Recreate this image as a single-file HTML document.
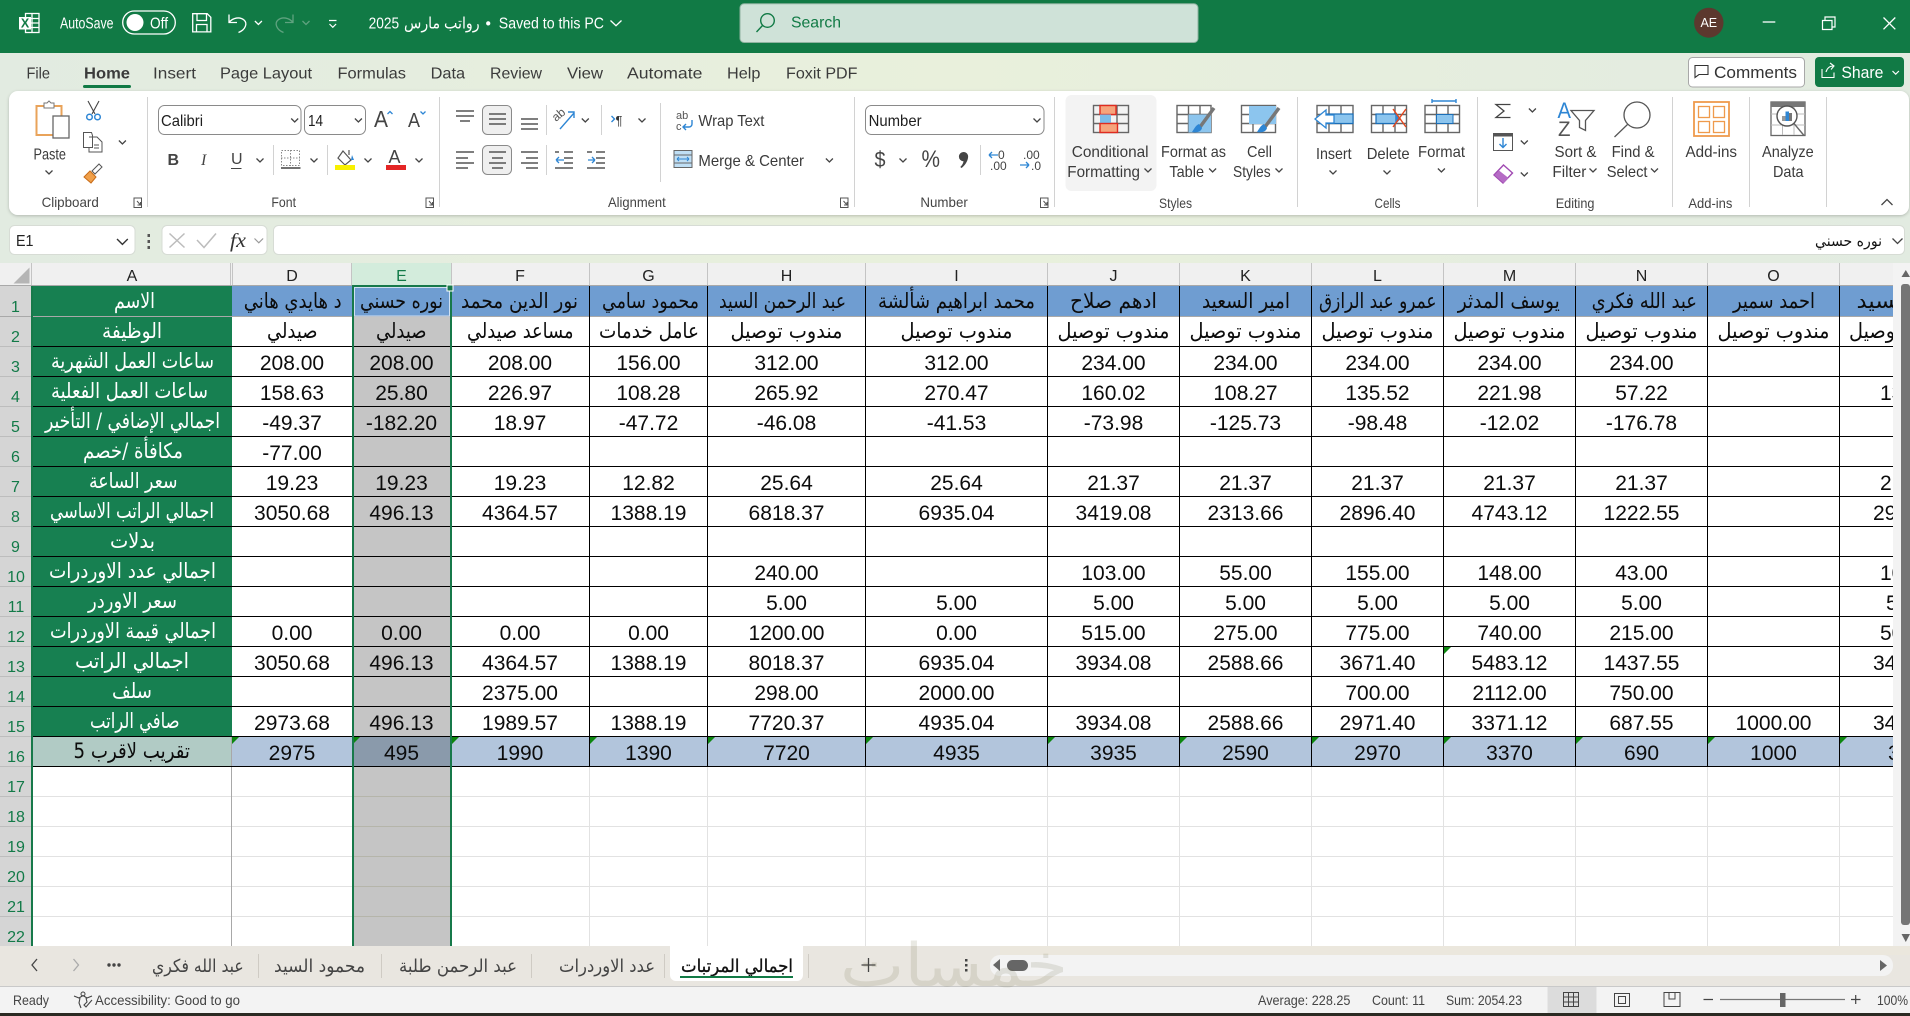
<!DOCTYPE html>
<html lang="en">
<head>
<meta charset="utf-8">
<title>Excel</title>
<style>
html,body{margin:0;padding:0;background:#fff;width:1910px;height:1016px;overflow:hidden}
svg{display:block;font-family:"Liberation Sans","DejaVu Sans",sans-serif}
.g{shape-rendering:crispEdges}
.r text{font-size:16px;fill:#3b3b3b}
.a text{font-family:"DejaVu Sans","Liberation Sans",sans-serif}
.n text{font-size:21px;fill:#0c0c0c;text-anchor:middle}
.p text{font-size:21px;fill:#0c0c0c}
.w text{fill:#fff;font-size:21px}
.b text{fill:#0c0c0c;font-size:21px}
.h text{font-size:16px;fill:#222;text-anchor:middle}
.rn text{font-size:16px;fill:#127a48;text-anchor:middle}
.s text{font-size:14px;fill:#444}
</style>
</head>
<body>
<svg width="1910" height="1016" viewBox="0 0 1910 1016" xmlns="http://www.w3.org/2000/svg">
<defs>
<linearGradient id="bg" x1="0" x2="1" y1="0" y2="0"><stop offset="0" stop-color="#e2ebe1"/><stop offset=".5" stop-color="#e9f0dc"/><stop offset="1" stop-color="#e2ebe1"/></linearGradient>
<path id="c" d="M-3.5-1.5 0 2 3.5-1.5" fill="none" stroke="#444" stroke-width="1.3"/>
<path id="lc" d="M0 0h7.5v9.5h-7.5zM3 3l3.500 4M6.500 4v3h-3" fill="none" stroke="#555" stroke-width="1"/>
<clipPath id="sheet"><rect x="0" y="263" width="1893" height="683"/></clipPath>
<filter id="sh" x="-1%" y="-5%" width="102%" height="115%"><feDropShadow dx="0" dy="1" stdDeviation="1.5" flood-color="#000" flood-opacity=".22"/></filter>
</defs>

<!-- backgrounds -->
<rect width="1910" height="1016" fill="url(#bg)"/>
<rect width="1910" height="53" fill="#117a45"/>

<!-- title bar -->
<g fill="none" stroke="#fff" stroke-width="1.3">
<rect x="25.5" y="13.5" width="13.5" height="19"/><path d="M32 14v18M31 18.500h8M31 23h8M31 27.500h8"/>
</g>
<rect x="19" y="17" width="12" height="12.5" fill="#fff"/>
<text x="25" y="27.5" font-size="12.5" font-weight="bold" fill="#117a45" text-anchor="middle">X</text>
<text x="60" y="28.500" font-size="15.500" fill="#fff" textLength="53.5" lengthAdjust="spacingAndGlyphs">AutoSave</text>
<rect x="122.7" y="11" width="52.6" height="23" rx="11.5" fill="none" stroke="#fff" stroke-width="1.3"/>
<circle cx="135" cy="22.5" r="8.5" fill="#fff"/>
<text x="150" y="28.500" font-size="15.500" fill="#fff" textLength="18" lengthAdjust="spacingAndGlyphs">Off</text>
<path d="M192.7 13.7h14.5l3.6 3.6v14.6h-18.1zM197 14v6.5h9.5V14M196.5 32v-7.5h10.5V32" fill="none" stroke="#fff" stroke-width="1.3"/>
<path d="M229 14.5v8h8M229 22.5c4-5 11-6 15-2.500 3.500 3 2 9.500-5.500 12.500" fill="none" stroke="#fff" stroke-width="1.3"/>
<path d="M254.900 21l3.500 3.500 3.500-3.500" fill="none" stroke="#fff" stroke-width="1.300"/>
<path d="M293 14.500v8h-8M293 22.500c-4-5-11-6-15-2.500-3.500 3-2 9.500 5.500 12.500" fill="none" stroke="#5fa27f" stroke-width="1.300"/>
<path d="M302.500 21 306 24.500 309.500 21" fill="none" stroke="#5fa27f" stroke-width="1.300"/>
<path d="M329 20.500h7.500M329.500 24l3.300 3.300 3.300-3.300" fill="none" stroke="#fff" stroke-width="1.200"/>
<g fill="#fff" font-size="15.500">
<text x="368.600" y="28.500" textLength="30.500" lengthAdjust="spacingAndGlyphs">2025</text>
<text x="404" y="28.500" font-size="16" textLength="75.600" lengthAdjust="spacingAndGlyphs">رواتب مارس</text>
<text x="485.500" y="28.500">•</text>
<text x="498.800" y="28.500" textLength="105.200" lengthAdjust="spacingAndGlyphs">Saved to this PC</text>
</g>
<path d="M610.500 20.500l5.500 5.200 5.500-5.200" fill="none" stroke="#fff" stroke-width="1.300"/>
<rect x="740" y="3.800" width="458" height="38.700" rx="4" fill="#cfe2d8" stroke="#8fb3a0"/>
<circle cx="767.500" cy="20.500" r="6.800" fill="none" stroke="#117a45" stroke-width="1.400"/>
<path d="M762.500 25.500 756.500 32" stroke="#117a45" stroke-width="1.400"/>
<text x="791" y="27.500" font-size="16" fill="#117a45" textLength="50" lengthAdjust="spacingAndGlyphs">Search</text>
<ellipse cx="1708.800" cy="22.700" rx="14.700" ry="15" fill="#5c382e"/>
<text x="1708.800" y="27" font-size="12.500" fill="#fff" text-anchor="middle">AE</text>
<path d="M1762.700 22h12.600" stroke="#fff" stroke-width="1.300"/>
<path d="M1822.500 20.500h9.500v9h-9.500zM1825 20v-3h10v10h-3" fill="none" stroke="#fff" stroke-width="1.200"/>
<path d="M1883.500 17.500l11.800 11.800M1895.300 17.500l-11.800 11.800" stroke="#fff" stroke-width="1.300"/>

<!-- tabs row -->
<g class="r">
<text x="26.500" y="78.500" textLength="23.500" lengthAdjust="spacingAndGlyphs">File</text>
<text x="84" y="78.500" font-weight="bold" textLength="46" lengthAdjust="spacingAndGlyphs">Home</text>
<text x="153" y="78.500" textLength="43" lengthAdjust="spacingAndGlyphs">Insert</text>
<text x="220" y="78.500" textLength="92" lengthAdjust="spacingAndGlyphs">Page Layout</text>
<text x="337.500" y="78.500" textLength="68.500" lengthAdjust="spacingAndGlyphs">Formulas</text>
<text x="430.600" y="78.500" textLength="34.500" lengthAdjust="spacingAndGlyphs">Data</text>
<text x="490" y="78.500" textLength="52" lengthAdjust="spacingAndGlyphs">Review</text>
<text x="567" y="78.500" textLength="36" lengthAdjust="spacingAndGlyphs">View</text>
<text x="627" y="78.500" textLength="75.400" lengthAdjust="spacingAndGlyphs">Automate</text>
<text x="727" y="78.500" textLength="33.400" lengthAdjust="spacingAndGlyphs">Help</text>
<text x="786" y="78.500" textLength="71.500" lengthAdjust="spacingAndGlyphs">Foxit PDF</text>
</g>
<rect x="83" y="85" width="48" height="3" rx="1.500" fill="#117a45"/>
<rect x="1688.500" y="57.500" width="116" height="29.500" rx="4" fill="#fff" stroke="#a8a8a8"/>
<path d="M1695 65.500h13v9h-9l-4 3z" fill="none" stroke="#333" stroke-width="1.100"/>
<text x="1714" y="78" font-size="16.500" fill="#333" textLength="83" lengthAdjust="spacingAndGlyphs">Comments</text>
<rect x="1815" y="57" width="89" height="30" rx="4" fill="#117a45"/>
<path d="M1822 69v8.500h12v-5M1826 72c1-4 4-6 7-6M1830 63l4 3-3 3.500" fill="none" stroke="#fff" stroke-width="1.100"/>
<text x="1841.400" y="78" font-size="16.500" fill="#fff" textLength="42" lengthAdjust="spacingAndGlyphs">Share</text>
<path d="M1892.500 71l3.200 3.200 3.200-3.200" fill="none" stroke="#fff" stroke-width="1.200"/>

<!-- ribbon body -->
<rect x="9" y="91" width="1900" height="124" rx="9" fill="#fff" filter="url(#sh)"/>
<g class="g" stroke="#d2d2d2">
<path d="M147.500 97v110M439.500 97v110M854.500 97v110M1054.500 97v110M1297.500 97v110M1477.500 97v110M1672.500 97v110M1749.500 97v110M1826.500 97v110"/>
<path d="M273.500 145v30M327.500 145v30M546.500 105v30M546.500 145v30M601.500 105v30M660.500 103v79M980.500 145v30"/>
</g>
<g class="s">
<text x="41.600" y="207" textLength="57.200" lengthAdjust="spacingAndGlyphs">Clipboard</text>
<text x="271.400" y="207" textLength="24.600" lengthAdjust="spacingAndGlyphs">Font</text>
<text x="608" y="207" textLength="57.700" lengthAdjust="spacingAndGlyphs">Alignment</text>
<text x="920.400" y="207" textLength="47.400" lengthAdjust="spacingAndGlyphs">Number</text>
<text x="1159" y="208" textLength="33" lengthAdjust="spacingAndGlyphs">Styles</text>
<text x="1374.500" y="208" textLength="26" lengthAdjust="spacingAndGlyphs">Cells</text>
<text x="1555.700" y="208" textLength="38.800" lengthAdjust="spacingAndGlyphs">Editing</text>
<text x="1688.400" y="208" textLength="44" lengthAdjust="spacingAndGlyphs">Add-ins</text>
</g>
<use href="#lc" x="134" y="198"/><use href="#lc" x="426" y="198"/><use href="#lc" x="840.500" y="198"/><use href="#lc" x="1040.500" y="198"/>
<path d="M1881.500 205l5.500-5.500 5.500 5.500" fill="none" stroke="#444" stroke-width="1.300"/>

<!-- clipboard -->
<rect x="36.500" y="106" width="25" height="29" fill="#fff" stroke="#e9a35a" stroke-width="2"/>
<path d="M44 106v-3h3l2-2 2 2h3v5h-10z" fill="#fff" stroke="#777"/>
<rect x="53" y="116" width="16" height="22" fill="#fff" stroke="#666" stroke-width="1.300"/>
<g class="r"><text x="33.500" y="159.500" textLength="32.500" lengthAdjust="spacingAndGlyphs">Paste</text></g>
<use href="#c" x="49" y="172"/>
<path d="M88 101l7 13M99 101l-7 13" stroke="#444" fill="none" stroke-width="1.100"/>
<circle cx="89.500" cy="117" r="2.800" fill="none" stroke="#2e86d4" stroke-width="1.500"/><circle cx="97.500" cy="117" r="2.800" fill="none" stroke="#2e86d4" stroke-width="1.500"/>
<path d="M83.500 132.500h8l1 3v12h-9zM89 137h8l5 5v10H89v-5M94 145h5M94 148h5" fill="#fff" stroke="#555"/>
<use href="#c" x="122.400" y="142"/>
<path d="M92 171l7-7 3 3-7 7z" fill="#fff" stroke="#555"/>
<path d="M90 171l6 6-5 6-7-6z" fill="#f0a04a" stroke="#c86c18"/>

<!-- font -->
<g fill="#fff" stroke="#8a8a8a"><rect x="158.500" y="105.500" width="142.500" height="29" rx="6"/><rect x="304.500" y="105.500" width="61" height="29" rx="6"/><rect x="865.500" y="105.500" width="178.500" height="29" rx="6"/></g>
<g font-size="16" fill="#1e1e1e">
<text x="161" y="126" textLength="42" lengthAdjust="spacingAndGlyphs">Calibri</text>
<text x="308" y="126" textLength="15" lengthAdjust="spacingAndGlyphs">14</text>
<text x="868.600" y="126" textLength="53" lengthAdjust="spacingAndGlyphs">Number</text>
</g>
<use href="#c" x="294.700" y="120"/><use href="#c" x="358.400" y="120"/><use href="#c" x="1037" y="120"/>
<text x="374" y="127" font-size="23" fill="#444" textLength="14" lengthAdjust="spacingAndGlyphs">A</text>
<path d="M387.500 114l2.500-2.500 2.500 2.500" fill="none" stroke="#2e86d4" stroke-width="1.300"/>
<text x="408" y="127" font-size="20" fill="#444" textLength="12" lengthAdjust="spacingAndGlyphs">A</text>
<path d="M420.500 111.500l2.500 2.500 2.500-2.500" fill="none" stroke="#2e86d4" stroke-width="1.300"/>
<text x="167.500" y="165" font-size="16" font-weight="bold" fill="#444">B</text>
<text x="201" y="165" font-size="16" font-style="italic" fill="#444" font-family="Liberation Serif">I</text>
<text x="231" y="164" font-size="16" fill="#444">U</text><path d="M231 168.500h10.500" stroke="#444"/>
<use href="#c" x="260" y="160"/>
<path d="M281.500 150.500h18v15h-18zM290.500 150v16M281 158h19" fill="none" stroke="#888" stroke-dasharray="1.500 1.500"/><path d="M281 168h19.500" stroke="#444" stroke-width="1.500"/>
<use href="#c" x="314" y="160"/>
<path d="M343 151l8 9-6 5-7-7zM349 155v-5" fill="none" stroke="#555" stroke-width="1.200"/><path d="M352 155l2 5h-3z" fill="#2e86d4"/>
<rect x="335" y="165" width="20" height="5" fill="#f8f000"/>
<use href="#c" x="368" y="160"/>
<text x="388.500" y="163" font-size="18" fill="#444">A</text>
<rect x="386" y="165" width="20" height="5" fill="#e42525"/>
<use href="#c" x="419" y="160"/>

<!-- alignment -->
<g fill="#efefef" stroke="#8a8a8a"><rect x="482.500" y="105.500" width="29" height="29" rx="5"/><rect x="482.500" y="145.500" width="29" height="29" rx="5"/></g>
<g stroke="#555" stroke-width="1.400" fill="none">
<path d="M456 111h18M456 116h18M460 121h10M489 114h17M489 119h17M489 124h17M521 119h17M521 124h17M521 129h17"/>
<path d="M456 152h18M456 158h12M456 163h18M456 168h12"/>
<path d="M489 152h17M492 158h11M489 163h17M492 168h11"/>
<path d="M521 152h17M526 158h12M521 163h17M526 168h12"/>
<path d="M564 152h9M564 158h9M564 163h9M555 152h4M555 168h18"/>
<path d="M596 152h9M596 158h9M596 163h9M587 168h18M587 152h5"/>
</g>
<path d="M556 160h8M556 160l3-3M556 160l3 3M588 160h7M595 160l-3-3M595 160l-3 3" fill="none" stroke="#2e86d4" stroke-width="1.300"/>
<text x="556" y="122" font-size="12" fill="#555" transform="rotate(-40 556 122)">ab</text>
<path d="M560 129l14-16M568 112h6v6" fill="none" stroke="#2e86d4" stroke-width="1.400"/>
<use href="#c" x="585.300" y="120"/>
<path d="M611.500 116l3 3-3 3" fill="none" stroke="#2e86d4" stroke-width="1.400"/>
<text x="615.500" y="125" font-size="13" fill="#333">¶</text>
<use href="#c" x="642" y="120"/>
<text x="676" y="119" font-size="11" fill="#555">ab</text><text x="676" y="130" font-size="11" fill="#555">c</text>
<path d="M692 120v4a3 3 0 0 1-3 3h-6M686 124l-3 3 3 3" fill="none" stroke="#2e86d4" stroke-width="1.400"/>
<g class="r">
<text x="698.400" y="126" textLength="66" lengthAdjust="spacingAndGlyphs">Wrap Text</text>
<text x="698.400" y="166" textLength="105.600" lengthAdjust="spacingAndGlyphs">Merge &amp; Center</text>
</g>
<rect x="674" y="150.500" width="18" height="17" fill="#bfdff5" stroke="#666"/>
<path d="M674 155h18M674 163h18" stroke="#666"/><path d="M677 159h12M677 159l2-2M677 159l2 2M689 159l-2-2M689 159l-2 2" fill="none" stroke="#2e86d4"/>
<use href="#c" x="829.400" y="160"/>

<!-- number -->
<text x="874.500" y="167" font-size="22" fill="#444" textLength="11" lengthAdjust="spacingAndGlyphs">$</text>
<use href="#c" x="903" y="160"/>
<text x="921.500" y="167" font-size="24" fill="#444" textLength="18.500" lengthAdjust="spacingAndGlyphs">%</text>
<path d="M963.500 152a4.600 4.600 0 0 1 4.600 5.200c-.4 4-3 8-6.600 10.800l-1.200-1c2-2 3-4 3.200-5.800a4.600 4.600 0 0 1 0-9.200z" fill="#444"/>
<text x="998" y="159" font-size="12" fill="#444">0</text><text x="990" y="170" font-size="12" fill="#444">.00</text>
<path d="M998 155h-9M989 155l3-3M989 155l3 3" fill="none" stroke="#2e86d4" stroke-width="1.300"/>
<text x="1023" y="159" font-size="12" fill="#444">.00</text><text x="1031" y="170" font-size="12" fill="#444">.0</text>
<path d="M1020 165h9M1029 165l-3-3M1029 165l-3 3" fill="none" stroke="#2e86d4" stroke-width="1.300"/>

<!-- styles -->
<rect x="1065.500" y="95" width="91" height="96" rx="6" fill="#f3f3f3"/>
<g fill="none" stroke="#666" stroke-width="1.400">
<rect x="1093.500" y="105.500" width="35" height="27"/><path d="M1093 114.500h36M1093 123.500h36M1105 105v27M1117 105v27"/>
<rect x="1177" y="105.500" width="34" height="27"/><path d="M1177 114.500h34M1177 123.500h34M1188.500 105v27M1200 105v27"/>
<rect x="1241.500" y="105.500" width="34" height="27"/><path d="M1241 114.500h35M1241 123.500h35M1253 105v27"/>
</g>
<rect x="1100" y="105.500" width="16" height="9" fill="#f6a47c" stroke="#e02b20" stroke-width="1.400"/>
<rect x="1100" y="114.500" width="11" height="9" fill="#7dbce8"/>
<rect x="1100" y="123.500" width="17.500" height="9" fill="#f6a47c" stroke="#e02b20" stroke-width="1.400"/>
<path d="M1188.500 114.500H1211v18h-22.500z" fill="#8cc5ee"/>
<path d="M1214 108l-14 19" stroke="#777" stroke-width="3.500"/><path d="M1199 124c-3 1-5 5-7 8 4 1 9 0 10-4z" fill="#2e86d4"/>
<path d="M1249 106h27v18h-27z" fill="#8cc5ee"/>
<path d="M1279 108l-14 19" stroke="#777" stroke-width="3.500"/><path d="M1264 124c-3 1-5 5-7 8 4 1 9 0 10-4z" fill="#2e86d4"/>
<g class="r">
<text x="1071.800" y="157" textLength="76.800" lengthAdjust="spacingAndGlyphs">Conditional</text>
<text x="1067.300" y="177" textLength="72.700" lengthAdjust="spacingAndGlyphs">Formatting</text>
<text x="1161" y="157" textLength="65" lengthAdjust="spacingAndGlyphs">Format as</text>
<text x="1169.400" y="177" textLength="34.600" lengthAdjust="spacingAndGlyphs">Table</text>
<text x="1247" y="157" textLength="25" lengthAdjust="spacingAndGlyphs">Cell</text>
<text x="1233" y="177" textLength="37.600" lengthAdjust="spacingAndGlyphs">Styles</text>
<text x="1316" y="159" textLength="35.600" lengthAdjust="spacingAndGlyphs">Insert</text>
<text x="1366.700" y="159" textLength="42.900" lengthAdjust="spacingAndGlyphs">Delete</text>
<text x="1418" y="157" textLength="47" lengthAdjust="spacingAndGlyphs">Format</text>
<text x="1554.500" y="157" textLength="42" lengthAdjust="spacingAndGlyphs">Sort &amp;</text>
<text x="1552.400" y="177" textLength="33.900" lengthAdjust="spacingAndGlyphs">Filter</text>
<text x="1611.600" y="157" textLength="42.900" lengthAdjust="spacingAndGlyphs">Find &amp;</text>
<text x="1606.700" y="177" textLength="40.800" lengthAdjust="spacingAndGlyphs">Select</text>
<text x="1685.500" y="157" textLength="51.500" lengthAdjust="spacingAndGlyphs">Add-ins</text>
<text x="1762" y="157" textLength="51.700" lengthAdjust="spacingAndGlyphs">Analyze</text>
<text x="1773" y="177" textLength="30.500" lengthAdjust="spacingAndGlyphs">Data</text>
</g>
<use href="#c" x="1148" y="170"/><use href="#c" x="1212.600" y="170"/><use href="#c" x="1279" y="170"/>

<!-- cells -->
<g fill="none" stroke="#666" stroke-width="1.400">
<rect x="1317" y="105.500" width="36" height="27"/><path d="M1317 114.500h36M1317 123.500h36M1329 105v27M1341 105v27"/>
<rect x="1371.500" y="105.500" width="35" height="27"/><path d="M1371 114.500h36M1371 123.500h36M1383 105v27M1395 105v27"/>
<rect x="1425" y="105.500" width="34.500" height="27"/><path d="M1425 114.500h35M1425 123.500h35M1436.500 105v27M1448 105v27"/>
</g>
<rect x="1325" y="114" width="28" height="9.500" fill="#8cc5ee" stroke="#1b6fb8" stroke-width="1.200"/>
<path d="M1326 110l-11 9 11 9v-5h8v-8h-8z" fill="#fff" stroke="#2e86d4" stroke-width="1.300"/>
<rect x="1376" y="114" width="20" height="9.500" fill="#8cc5ee" stroke="#1b6fb8" stroke-width="1.200"/>
<path d="M1396 114l5 4.700-5 4.800z" fill="#2e86d4"/>
<path d="M1393 109l13 18M1406 109l-13 18" stroke="#e4461d" stroke-width="1.400"/>
<rect x="1436.500" y="114.500" width="16.500" height="9" fill="#8cc5ee" stroke="#1b6fb8"/>
<path d="M1432 101h24M1432 99v4M1456 99v4" stroke="#2e86d4" stroke-width="1.400" fill="none"/>
<use href="#c" x="1333" y="172"/><use href="#c" x="1387" y="172"/><use href="#c" x="1441.400" y="170"/>

<!-- editing -->
<path d="M1510.500 104.500h-14.500l8 6.500-8 6.500h14.500" fill="none" stroke="#444" stroke-width="1.300"/>
<use href="#c" x="1532.400" y="110"/>
<rect x="1493.500" y="133.500" width="19" height="17" fill="#fff" stroke="#555"/><rect x="1493.500" y="133.500" width="19" height="3" fill="#555"/>
<path d="M1503 138v9M1499.500 144l3.500 3.500 3.500-3.500" fill="none" stroke="#2e86d4" stroke-width="1.400"/>
<use href="#c" x="1524.300" y="142"/>
<path d="M1503.500 165l9 8-9.500 10-9-8z" fill="#fff" stroke="#a04ab2" stroke-width="1.400"/><path d="M1494.500 175l4.500-4.500 9.500 7.500-5 5z" fill="#b56cc5"/>
<use href="#c" x="1524.300" y="174"/>
<text x="1557.500" y="118" font-size="22" fill="#2e86d4" textLength="13.500" lengthAdjust="spacingAndGlyphs">A</text>
<text x="1558" y="136" font-size="21" fill="#555" textLength="12.500" lengthAdjust="spacingAndGlyphs">Z</text>
<path d="M1571 110.500h23l-8.500 10v10l-6-3v-7z" fill="none" stroke="#555" stroke-width="1.300"/>
<use href="#c" x="1593" y="170"/>
<circle cx="1637" cy="115" r="13" fill="none" stroke="#555" stroke-width="1.300"/>
<path d="M1627.500 124.500 1614.500 137" stroke="#555" stroke-width="1.300"/>
<use href="#c" x="1654.500" y="170"/>

<!-- add-ins / analyze -->
<rect x="1694" y="102" width="35" height="34" fill="#fff" stroke="#ef9a4c" stroke-width="1.800"/>
<g fill="#fff" stroke="#ef9a4c" stroke-width="1.300"><rect x="1698.500" y="106.500" width="11" height="11"/><rect x="1713.500" y="106.500" width="11" height="11"/><rect x="1698.500" y="121.500" width="11" height="11"/><rect x="1713.500" y="121.500" width="11" height="11"/></g>
<rect x="1771" y="102" width="34" height="33.500" fill="#fff" stroke="#666" stroke-width="1.300"/><rect x="1771" y="102" width="34" height="5" fill="#777"/>
<path d="M1771 114h34M1771 125h34M1782.500 107v28M1794 107v28" stroke="#bbb"/>
<circle cx="1787" cy="116" r="10" fill="#fff" stroke="#555" stroke-width="1.400"/>
<rect x="1782" y="116" width="3.500" height="5" fill="#999"/><rect x="1785.500" y="111.500" width="3.500" height="9.500" fill="#2e86d4"/><rect x="1789" y="113" width="3" height="8" fill="#777"/>
<path d="M1794 123.500l10 12" stroke="#666" stroke-width="1.400"/>

<!-- formula bar -->
<g fill="#fff" stroke="#d7dcd5"><rect x="9.500" y="225.500" width="125.500" height="29" rx="5"/><rect x="162" y="225.500" width="105" height="29" rx="5"/><rect x="273.500" y="225.500" width="1631" height="29" rx="5"/></g>
<text x="16" y="246" font-size="16" fill="#222" textLength="17.500" lengthAdjust="spacingAndGlyphs">E1</text>
<path d="M117 239l5.400 5.400 5.400-5.400" fill="none" stroke="#333" stroke-width="1.400"/>
<g fill="#555"><rect x="147.500" y="234" width="2.500" height="3"/><rect x="147.500" y="240" width="2.500" height="3"/><rect x="147.500" y="246" width="2.500" height="3"/></g>
<path d="M169.500 233.500l15 14M184.500 233.500l-15 14" stroke="#bcbcbc" stroke-width="1.500"/>
<path d="M197 240l7 7.500 12-14" fill="none" stroke="#bcbcbc" stroke-width="1.500"/>
<text x="230" y="247" font-size="20" font-style="italic" font-family="Liberation Serif" fill="#333" textLength="16" lengthAdjust="spacingAndGlyphs">fx</text>
<path d="M254.500 238.500l4.300 4.300 4.300-4.300" fill="none" stroke="#999" stroke-width="1.200"/>
<text x="1815" y="246" font-size="15" fill="#111" style="font-family:'DejaVu Sans',sans-serif" textLength="67" lengthAdjust="spacingAndGlyphs">نوره حسني</text>
<path d="M1892.500 238.500l5 5 5-5" fill="none" stroke="#444" stroke-width="1.300"/>

<!-- sheet -->
<g clip-path="url(#sheet)">
<rect x="0" y="263" width="1893" height="23" fill="#f0f0f0"/>
<rect x="352" y="263" width="99" height="23" fill="#d3ecdc"/>
<rect x="0" y="286" width="31" height="660" fill="#d5d5d5"/>
<path d="M29.500 267.500v16h-16z" fill="#b5b5b5"/>
<rect x="32" y="286" width="1861" height="660" fill="#fff"/>
<rect x="32" y="286" width="200" height="450" fill="#178051"/>
<rect x="32" y="736" width="200" height="30" fill="#b1cbc5"/>
<rect x="232" y="286" width="1661" height="30" fill="#6f9dd1"/>
<rect x="232" y="736" width="1661" height="30" fill="#b2c5dc"/>
<rect x="352" y="316" width="99" height="630" fill="#c5c5c5"/>
<rect x="352" y="736" width="99" height="30" fill="#8a9aab"/>

<g class="g" fill="none">
<path stroke="#c4c4c4" d="M31.500 263v23M230.500 263v23M232.500 263v23M351.500 263v23M451.500 263v23M589.500 263v23M707.500 263v23M865.500 263v23M1047.500 263v23M1179.500 263v23M1311.500 263v23M1443.500 263v23M1575.500 263v23M1707.500 263v23M1839.500 263v23"/>
<path stroke="#a9a9a9" d="M0 285.500H1893M0 316.500H1893"/>
<path stroke="#bdbdbd" d="M0 346.500h31M0 376.500h31M0 406.500h31M0 436.500h31M0 466.500h31M0 496.500h31M0 526.500h31M0 556.500h31M0 586.500h31M0 616.500h31M0 646.500h31M0 676.500h31M0 706.500h31M0 736.500h31M0 766.500h31M0 796.500h31M0 826.500h31M0 856.500h31M0 886.500h31M0 916.500h31"/>
<path stroke="#e2e2e2" d="M232 796.500H1893M232 826.500H1893M232 856.500H1893M232 886.500H1893M232 916.500H1893M32 796.500H231M32 826.500H231M32 856.500H231M32 886.500H231M32 916.500H231M589.500 766V946M707.500 766V946M865.500 766V946M1047.500 766V946M1179.500 766V946M1311.500 766V946M1443.500 766V946M1575.500 766V946M1707.500 766V946M1839.500 766V946"/>
<path stroke="#b5b5aa" d="M353 796.500H450M353 826.500H450M353 856.500H450M353 886.500H450M353 916.500H450"/>
<path stroke="#a8a8a8" d="M231.500 736V946"/>
<path stroke="#000" d="M589.500 286V766M707.500 286V766M865.500 286V766M1047.500 286V766M1179.500 286V766M1311.500 286V766M1443.500 286V766M1575.500 286V766M1707.500 286V766M1839.500 286V766"/>
<path stroke="#000" d="M32 346.500H1893M32 376.500H1893M32 406.500H1893M32 436.500H1893M32 466.500H1893M32 496.500H1893M32 526.500H1893M32 556.500H1893M32 586.500H1893M32 616.500H1893M32 646.500H1893M32 676.500H1893M32 706.500H1893M32 736.500H1893M32 766.500H1893"/>
</g>

<!-- triangles -->
<g fill="#0d870f">
<path d="M232 737h7l-7 7zM353 737h7l-7 7zM452 737h7l-7 7zM590 737h7l-7 7zM708 737h7l-7 7zM866 737h7l-7 7zM1048 737h7l-7 7zM1180 737h7l-7 7zM1312 737h7l-7 7zM1444 737h7l-7 7zM1576 737h7l-7 7zM1708 737h7l-7 7zM1840 737h7l-7 7zM1444 647h7l-7 7z"/>
</g>

<!-- column headers -->
<g class="h">
<text x="132" y="281">A</text><text x="292" y="281">D</text><text x="401.500" y="281" style="fill:#127a48">E</text><text x="520" y="281">F</text><text x="648.500" y="281">G</text><text x="786.500" y="281">H</text><text x="956.500" y="281">I</text><text x="1113.500" y="281">J</text><text x="1245.500" y="281">K</text><text x="1377.500" y="281">L</text><text x="1509.500" y="281">M</text><text x="1641.500" y="281">N</text><text x="1773.500" y="281">O</text>
</g>
<!-- row numbers -->
<g class="rn">
<text x="15.500" y="312">1</text><text x="15.500" y="342">2</text><text x="15.500" y="372">3</text><text x="15.500" y="402">4</text><text x="15.500" y="432">5</text><text x="15.500" y="462">6</text><text x="15.500" y="492">7</text><text x="15.500" y="522">8</text><text x="15.500" y="552">9</text><text x="16" y="582">10</text><text x="16" y="612">11</text><text x="16" y="642">12</text><text x="16" y="672">13</text><text x="16" y="702">14</text><text x="16" y="732">15</text><text x="16" y="762">16</text><text x="16" y="792">17</text><text x="16" y="822">18</text><text x="16" y="852">19</text><text x="16" y="882">20</text><text x="16" y="912">21</text><text x="16" y="942">22</text>
</g>

<!-- col A labels -->
<g class="a w">
<text x="114" y="308" textLength="41" lengthAdjust="spacingAndGlyphs">الاسم</text>
<text x="102" y="338" textLength="60" lengthAdjust="spacingAndGlyphs">الوظيفة</text>
<text x="51" y="368" textLength="163" lengthAdjust="spacingAndGlyphs">ساعات العمل الشهرية</text>
<text x="51" y="398" textLength="157" lengthAdjust="spacingAndGlyphs">ساعات العمل الفعلية</text>
<text x="45" y="428" textLength="175" lengthAdjust="spacingAndGlyphs">اجمالي الإضافي / التأخير</text>
<text x="83" y="458" textLength="100" lengthAdjust="spacingAndGlyphs">مكافأة /خصم</text>
<text x="89" y="488" textLength="88.500" lengthAdjust="spacingAndGlyphs">سعر الساعة</text>
<text x="50" y="518" textLength="164" lengthAdjust="spacingAndGlyphs">اجمالي الراتب الاساسي</text>
<text x="110" y="548" textLength="45" lengthAdjust="spacingAndGlyphs">بدلات</text>
<text x="49" y="578" textLength="167" lengthAdjust="spacingAndGlyphs">اجمالي عدد الاوردرات</text>
<text x="88" y="608" textLength="89" lengthAdjust="spacingAndGlyphs">سعر الاوردر</text>
<text x="50" y="638" textLength="166" lengthAdjust="spacingAndGlyphs">اجمالي قيمة الاوردرات</text>
<text x="75" y="668" textLength="114" lengthAdjust="spacingAndGlyphs">اجمالي الراتب</text>
<text x="112" y="698" textLength="40" lengthAdjust="spacingAndGlyphs">سلف</text>
<text x="90" y="728" textLength="89.600" lengthAdjust="spacingAndGlyphs">صافي الراتب</text>
</g>
<g class="a b">
<text x="73.500" y="758" textLength="116.500" lengthAdjust="spacingAndGlyphs">تقريب لاقرب 5</text>
<!-- row 1 -->
<text x="243.700" y="308" textLength="98" lengthAdjust="spacingAndGlyphs">د هايدي هاني</text>
<text x="360" y="308" textLength="83" lengthAdjust="spacingAndGlyphs">نوره حسني</text>
<text x="461" y="308" textLength="117" lengthAdjust="spacingAndGlyphs">نور الدين محمد</text>
<text x="602" y="308" textLength="97" lengthAdjust="spacingAndGlyphs">محمود سامي</text>
<text x="719" y="308" textLength="127" lengthAdjust="spacingAndGlyphs">عبد الرحمن السيد</text>
<text x="878" y="308" textLength="157" lengthAdjust="spacingAndGlyphs">محمد ابراهيم شألشة</text>
<text x="1070" y="308" textLength="87" lengthAdjust="spacingAndGlyphs">ادهم صلاح</text>
<text x="1202" y="308" textLength="88" lengthAdjust="spacingAndGlyphs">امير السعيد</text>
<text x="1319" y="308" textLength="117.500" lengthAdjust="spacingAndGlyphs">عمرو عبد الرازق</text>
<text x="1457.800" y="308" textLength="102" lengthAdjust="spacingAndGlyphs">يوسف المدثر</text>
<text x="1591.600" y="308" textLength="105.400" lengthAdjust="spacingAndGlyphs">عبد الله فكري</text>
<text x="1733" y="308" textLength="82" lengthAdjust="spacingAndGlyphs">احمد سمير</text>
<text x="1856.500" y="308" textLength="111" lengthAdjust="spacingAndGlyphs">حسن السيد</text>
<!-- row 2 -->
<text x="267" y="338" textLength="50.500" lengthAdjust="spacingAndGlyphs">صيدلي</text>
<text x="376" y="338" textLength="50.500" lengthAdjust="spacingAndGlyphs">صيدلي</text>
<text x="467" y="338" textLength="106.500" lengthAdjust="spacingAndGlyphs">مساعد صيدلي</text>
<text x="599" y="338" textLength="100" lengthAdjust="spacingAndGlyphs">عامل خدمات</text>
<text x="730.500" y="338" textLength="112" lengthAdjust="spacingAndGlyphs">مندوب توصيل</text>
<text x="900.500" y="338" textLength="112" lengthAdjust="spacingAndGlyphs">مندوب توصيل</text>
<text x="1057.500" y="338" textLength="112" lengthAdjust="spacingAndGlyphs">مندوب توصيل</text>
<text x="1189.500" y="338" textLength="112" lengthAdjust="spacingAndGlyphs">مندوب توصيل</text>
<text x="1321.500" y="338" textLength="112" lengthAdjust="spacingAndGlyphs">مندوب توصيل</text>
<text x="1453.500" y="338" textLength="112" lengthAdjust="spacingAndGlyphs">مندوب توصيل</text>
<text x="1585.500" y="338" textLength="112" lengthAdjust="spacingAndGlyphs">مندوب توصيل</text>
<text x="1717.500" y="338" textLength="112" lengthAdjust="spacingAndGlyphs">مندوب توصيل</text>
<text x="1849" y="338" textLength="112" lengthAdjust="spacingAndGlyphs">مندوب توصيل</text>
</g>

<!-- numbers -->
<g class="n">
<g transform="translate(0,370)"><text x="292">208.00</text><text x="401.500">208.00</text><text x="520">208.00</text><text x="648.500">156.00</text><text x="786.500">312.00</text><text x="956.500">312.00</text><text x="1113.500">234.00</text><text x="1245.500">234.00</text><text x="1377.500">234.00</text><text x="1509.500">234.00</text><text x="1641.500">234.00</text></g>
<g transform="translate(0,400)"><text x="292">158.63</text><text x="401.500">25.80</text><text x="520">226.97</text><text x="648.500">108.28</text><text x="786.500">265.92</text><text x="956.500">270.47</text><text x="1113.500">160.02</text><text x="1245.500">108.27</text><text x="1377.500">135.52</text><text x="1509.500">221.98</text><text x="1641.500">57.22</text></g>
<g transform="translate(0,430)"><text x="292">-49.37</text><text x="401.500">-182.20</text><text x="520">18.97</text><text x="648.500">-47.72</text><text x="786.500">-46.08</text><text x="956.500">-41.53</text><text x="1113.500">-73.98</text><text x="1245.500">-125.73</text><text x="1377.500">-98.48</text><text x="1509.500">-12.02</text><text x="1641.500">-176.78</text></g>
<g transform="translate(0,460)"><text x="292">-77.00</text></g>
<g transform="translate(0,490)"><text x="292">19.23</text><text x="401.500">19.23</text><text x="520">19.23</text><text x="648.500">12.82</text><text x="786.500">25.64</text><text x="956.500">25.64</text><text x="1113.500">21.37</text><text x="1245.500">21.37</text><text x="1377.500">21.37</text><text x="1509.500">21.37</text><text x="1641.500">21.37</text></g>
<g transform="translate(0,520)"><text x="292">3050.68</text><text x="401.500">496.13</text><text x="520">4364.57</text><text x="648.500">1388.19</text><text x="786.500">6818.37</text><text x="956.500">6935.04</text><text x="1113.500">3419.08</text><text x="1245.500">2313.66</text><text x="1377.500">2896.40</text><text x="1509.500">4743.12</text><text x="1641.500">1222.55</text></g>
<g transform="translate(0,580)"><text x="786.500">240.00</text><text x="1113.500">103.00</text><text x="1245.500">55.00</text><text x="1377.500">155.00</text><text x="1509.500">148.00</text><text x="1641.500">43.00</text></g>
<g transform="translate(0,610)"><text x="786.500">5.00</text><text x="956.500">5.00</text><text x="1113.500">5.00</text><text x="1245.500">5.00</text><text x="1377.500">5.00</text><text x="1509.500">5.00</text><text x="1641.500">5.00</text></g>
<g transform="translate(0,640)"><text x="292">0.00</text><text x="401.500">0.00</text><text x="520">0.00</text><text x="648.500">0.00</text><text x="786.500">1200.00</text><text x="956.500">0.00</text><text x="1113.500">515.00</text><text x="1245.500">275.00</text><text x="1377.500">775.00</text><text x="1509.500">740.00</text><text x="1641.500">215.00</text></g>
<g transform="translate(0,670)"><text x="292">3050.68</text><text x="401.500">496.13</text><text x="520">4364.57</text><text x="648.500">1388.19</text><text x="786.500">8018.37</text><text x="956.500">6935.04</text><text x="1113.500">3934.08</text><text x="1245.500">2588.66</text><text x="1377.500">3671.40</text><text x="1509.500">5483.12</text><text x="1641.500">1437.55</text></g>
<g transform="translate(0,700)"><text x="520">2375.00</text><text x="786.500">298.00</text><text x="956.500">2000.00</text><text x="1377.500">700.00</text><text x="1509.500">2112.00</text><text x="1641.500">750.00</text></g>
<g transform="translate(0,730)"><text x="292">2973.68</text><text x="401.500">496.13</text><text x="520">1989.57</text><text x="648.500">1388.19</text><text x="786.500">7720.37</text><text x="956.500">4935.04</text><text x="1113.500">3934.08</text><text x="1245.500">2588.66</text><text x="1377.500">2971.40</text><text x="1509.500">3371.12</text><text x="1641.500">687.55</text><text x="1773.500">1000.00</text></g>
<g transform="translate(0,760)"><text x="292">2975</text><text x="401.500">495</text><text x="520">1990</text><text x="648.500">1390</text><text x="786.500">7720</text><text x="956.500">4935</text><text x="1113.500">3935</text><text x="1245.500">2590</text><text x="1377.500">2970</text><text x="1509.500">3370</text><text x="1641.500">690</text><text x="1773.500">1000</text></g>
</g>
<g class="p">
<text x="1880" y="400">135.20</text>
<text x="1880" y="490">21.37</text>
<text x="1873" y="520">2900.00</text>
<text x="1880" y="580">103.00</text>
<text x="1886" y="610">5.00</text>
<text x="1880" y="640">500.00</text>
<text x="1873" y="670">3400.00</text>
<text x="1873" y="730">3400.00</text>
<text x="1888" y="760">3400</text>
</g>

<!-- selection -->
<g class="g">
<rect x="352" y="285" width="2" height="661" fill="#17794a"/>
<rect x="450" y="285" width="2" height="661" fill="#17794a"/>
<rect x="352" y="285" width="100" height="2" fill="#17794a"/>
<rect x="31" y="286" width="2" height="660" fill="#17794a"/>
<rect x="354.500" y="287.500" width="95" height="28.500" fill="none" stroke="#cfe0f2" stroke-width="1"/>
<rect x="447" y="285" width="6" height="6" fill="#17794a" stroke="#fff"/>
</g>
</g>

<!-- vertical scrollbar -->
<rect x="1893" y="263" width="17" height="683" fill="#f3f3f3"/>
<rect x="1901" y="284" width="9" height="641" rx="3" fill="#757575"/>
<path d="M1901.500 277h8.500l-4.200-7z" fill="#666"/>
<path d="M1901.500 934h8.500l-4.200 8z" fill="#666"/>

<!-- sheet tabs -->
<rect x="0" y="946" width="1910" height="40" fill="#e9e6e0"/>
<rect x="1000" y="946" width="910" height="9" fill="#ebe7dd"/>
<rect x="990" y="955" width="903" height="21" rx="10" fill="#f3f3f3"/>
<path d="M37 959l-5 6 5 6" fill="none" stroke="#444" stroke-width="1.300"/>
<path d="M73.500 959l5 6-5 6" fill="none" stroke="#aaa" stroke-width="1.300"/>
<g fill="#444"><circle cx="109" cy="965" r="1.700"/><circle cx="114" cy="965" r="1.700"/><circle cx="119" cy="965" r="1.700"/></g>
<g class="a" fill="#444" font-size="18">
<text x="152" y="972" textLength="91.700" lengthAdjust="spacingAndGlyphs">عبد الله فكري</text>
<text x="274" y="972" textLength="91" lengthAdjust="spacingAndGlyphs">محمود السيد</text>
<text x="399" y="972" textLength="118" lengthAdjust="spacingAndGlyphs">عبد الرحمن طلبة</text>
<text x="559" y="972" textLength="96" lengthAdjust="spacingAndGlyphs">عدد الاوردرات</text>
</g>
<path d="M258.500 954v24M381.500 954v24M531.500 954v24M664.500 954v24M808.500 954v24" stroke="#cfcbc4" class="g"/>
<path d="M670 946h133v29a6 6 0 0 1-6 6H676a6 6 0 0 1-6-6z" fill="#fff"/>
<text style="font-family:'DejaVu Sans',sans-serif" x="681" y="972" font-size="18" fill="#111" stroke="#111" stroke-width=".3" textLength="112" lengthAdjust="spacingAndGlyphs">اجمالي المرتبات</text>
<rect x="680" y="976" width="113" height="2" fill="#117a45"/>
<path d="M868.500 958v14M861.500 965h14" stroke="#444" stroke-width="1.300"/>
<g fill="#444"><rect x="965" y="959" width="2.500" height="2.500"/><rect x="965" y="964" width="2.500" height="2.500"/><rect x="965" y="969" width="2.500" height="2.500"/></g>
<path d="M1000 959v12l-7-6z" fill="#666"/>
<rect x="1007" y="960" width="21" height="11" rx="5.500" fill="#666"/>
<path d="M1880 960v11l7-5.500z" fill="#666"/>

<!-- status bar -->
<rect x="0" y="986" width="1910" height="27" fill="#f3f3f3"/>
<path d="M0 986.500H1910" stroke="#c9c9c9" class="g"/>
<rect x="1547.500" y="987" width="49" height="26" fill="#dcdcdc"/>
<g class="s" style="--x:0">
<text x="13" y="1005" textLength="36" lengthAdjust="spacingAndGlyphs">Ready</text>
<text x="95" y="1005" textLength="145" lengthAdjust="spacingAndGlyphs">Accessibility: Good to go</text>
<text x="1258" y="1005" textLength="92.400" lengthAdjust="spacingAndGlyphs">Average: 228.25</text>
<text x="1372" y="1005" textLength="53" lengthAdjust="spacingAndGlyphs">Count: 11</text>
<text x="1446" y="1005" textLength="76" lengthAdjust="spacingAndGlyphs">Sum: 2054.23</text>
<text x="1877" y="1005" textLength="31" lengthAdjust="spacingAndGlyphs">100%</text>
</g>
<path d="M74 996l5 2 4-2.500 4 2.500 5-2M80 998l-1 5 2 5M86 998l1 4-3 3 2 2 6-7" fill="none" stroke="#444" stroke-width="1.100"/><circle cx="83" cy="994" r="2" fill="none" stroke="#444"/>
<g fill="none" stroke="#444" stroke-width="1.100" class="g">
<rect x="1563.500" y="992.500" width="15" height="14"/><path d="M1568.500 992v15M1573.500 992v15M1563 997h16M1563 1002h16"/>
<rect x="1614.500" y="993.500" width="15" height="13"/><rect x="1618.500" y="996.500" width="7" height="7"/>
<path d="M1664 992.500h16v14h-16zM1669 992.500v6.500h6v-6.500"/>
</g>
<path d="M1703.500 999.500h9.500M1851 999.500h9.500M1855.700 995v9" stroke="#444" stroke-width="1.200"/>
<path d="M1720 999.500h125" stroke="#777" stroke-width="1.200"/>
<rect x="1780" y="993" width="5.500" height="14" fill="#666"/>

<!-- watermark -->
<text x="840" y="986" font-size="60" fill="#5a5a30" opacity=".13" style="font-family:'DejaVu Sans',sans-serif" textLength="228" lengthAdjust="spacingAndGlyphs">خمسات</text>

<rect x="0" y="1013" width="1910" height="3" fill="#2b2a22"/>
</svg>
</body>
</html>
